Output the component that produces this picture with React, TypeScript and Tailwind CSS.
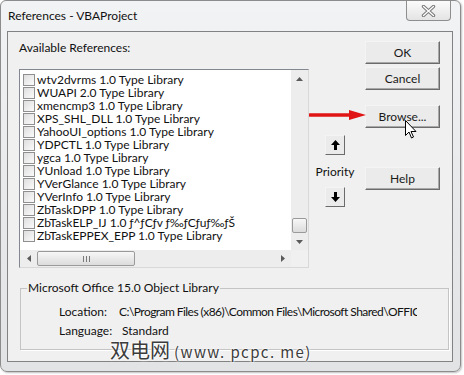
import React from "react";

const items = [
  "wtv2dvrms 1.0 Type Library",
  "WUAPI 2.0 Type Library",
  "xmencmp3 1.0 Type Library",
  "XPS_SHL_DLL 1.0 Type Library",
  "YahooUI_options 1.0 Type Library",
  "YDPCTL 1.0 Type Library",
  "ygca 1.0 Type Library",
  "YUnload 1.0 Type Library",
  "YVerGlance 1.0 Type Library",
  "YVerInfo 1.0 Type Library",
  "ZbTaskDPP 1.0 Type Library",
  "ZbTaskELP_IJ 1.0 ƒ^ƒCƒv ƒ‰ƒCƒuƒ‰ƒŠ",
  "ZbTaskEPPEX_EPP 1.0 Type Library",
];

function Btn({ label, className = "" }: { label: string; className?: string }) {
  return (
    <div
      className={
        "h-[23px] w-[75px] flex items-center justify-center border border-t-[#f4f4f4] border-l-[#f4f4f4] border-r-[#6b6b6b] border-b-[#6b6b6b] bg-[#ebebeb] shadow-[inset_-1px_-1px_0_#a8a8a8] text-[12px] text-[#1a1a1a] " +
        className
      }
    >
      {label}
    </div>
  );
}

function Tri({ dir }: { dir: "up" | "down" | "left" | "right" }) {
  const pts: Record<string, string> = {
    up: "0,4 3.5,0 7,4",
    down: "0,0 3.5,4 7,0",
    left: "4,0 0,3.5 4,7",
    right: "0,0 4,3.5 0,7",
  };
  const horiz = dir === "left" || dir === "right";
  return (
    <svg width={horiz ? 4 : 7} height={horiz ? 7 : 4} viewBox={horiz ? "0 0 4 7" : "0 0 7 4"}>
      <polygon points={pts[dir]} fill="#5a5a5a" />
    </svg>
  );
}

export default function App() {
  return (
    <div className="relative w-[464px] h-[375px] bg-white overflow-hidden font-['Lato',sans-serif] text-[#111]">
      <div className="w-[461px] h-[372px] rounded-b-[7px] rounded-t-[6px] border border-[#8c8c8c] bg-gradient-to-b from-[#f2f3f4] via-[#e9eaeb] to-[#e2e3e4] flex flex-col shadow-[1px_1px_2px_rgba(0,0,0,0.25)]">
        {/* title bar */}
        <div className="h-[30px] flex items-start justify-between">
          <div className="pl-[7px] pt-[6px] text-[12px] leading-[18px] text-[#111]">References - VBAProject</div>
          <div className="mr-[9px] w-[45px] h-[20px] rounded-b-[4px] border border-t-0 border-[#8e8e8e] bg-gradient-to-b from-[#fbfbfb] to-[#e4e4e4] flex items-center justify-center">
            <svg width="15" height="12" viewBox="0 0 15 12">
              <path d="M2.5 1.5 L12.5 10.5 M12.5 1.5 L2.5 10.5" stroke="#7a7a7a" strokeWidth="3.4" strokeLinecap="round" />
              <path d="M2.5 1.5 L12.5 10.5 M12.5 1.5 L2.5 10.5" stroke="#ffffff" strokeWidth="1.3" strokeLinecap="round" />
            </svg>
          </div>
        </div>
        {/* client */}
        <div className="ml-[6px] w-[446px] h-[331px] border border-[#828282] bg-[#f0f0f0] flex flex-col">
          <div className="flex items-start">
            {/* left column */}
            <div className="ml-[11px] pt-[8px] flex flex-col">
              <div className="h-[16px] leading-[16px] text-[12px]">Available References:</div>
              <div className="mt-[13px] w-[290px] h-[199px] border border-[#828790] border-r-[#d8d8d8] border-b-[#d8d8d8] bg-white flex flex-col">
                <div className="flex h-[180px]">
                  <div className="flex-1 pt-[3px] pl-[3px] overflow-hidden">
                    {items.map((t, i) => (
                      <div key={i} className="h-[13px] flex items-center whitespace-nowrap">
                        <div className="w-[12px] h-[12px] border border-[#8f8f8f] bg-gradient-to-br from-[#dedede] to-[#fbfbfb] shrink-0" />
                        <span className="ml-[2px] text-[12px] leading-[13px] text-[#111]">{t}</span>
                      </div>
                    ))}
                  </div>
                  <div className="w-[17px] h-[180px] bg-[#ededed] flex flex-col items-center">
                    <div className="h-[17px] flex items-center justify-center">
                      <Tri dir="up" />
                    </div>
                    <div className="flex-1" />
                    <div className="w-[15px] h-[15px] rounded-[2px] border border-[#9a9a9a] bg-gradient-to-b from-[#f7f7f7] to-[#dcdcdc]" />
                    <div className="h-[17px] flex items-center justify-center">
                      <Tri dir="down" />
                    </div>
                  </div>
                </div>
                <div className="flex h-[17px]">
                  <div className="flex-1 bg-[#ededed] flex items-center">
                    <div className="w-[17px] flex items-center justify-center">
                      <Tri dir="left" />
                    </div>
                    <div className="w-[98px] h-[15px] rounded-[2px] border border-[#9a9a9a] bg-gradient-to-b from-[#f7f7f7] to-[#dcdcdc] flex items-center justify-center gap-[2px]">
                      <div className="w-[1px] h-[6px] bg-[#7a7a7a]" />
                      <div className="w-[1px] h-[6px] bg-[#7a7a7a]" />
                      <div className="w-[1px] h-[6px] bg-[#7a7a7a]" />
                    </div>
                    <div className="flex-1" />
                    <div className="w-[17px] flex items-center justify-center">
                      <Tri dir="right" />
                    </div>
                  </div>
                  <div className="w-[17px] bg-[#f0f0f0]" />
                </div>
              </div>
            </div>
            {/* priority column */}
            <div className="ml-[16px] pt-[103px] w-[20px] flex flex-col items-center">
              <div className="w-[20px] h-[20px] border border-t-[#f4f4f4] border-l-[#f4f4f4] border-r-[#6b6b6b] border-b-[#6b6b6b] bg-[#ebebeb] flex items-center justify-center">
                <svg width="9" height="10" viewBox="0 0 9 10">
                  <polygon points="4.5,0 9,5 6,5 6,10 3,10 3,5 0,5" fill="#000" />
                </svg>
              </div>
              <div className="mt-[9px] h-[16px] leading-[16px] text-[12px] whitespace-nowrap">Priority</div>
              <div className="mt-[7px] w-[20px] h-[20px] border border-t-[#f4f4f4] border-l-[#f4f4f4] border-r-[#6b6b6b] border-b-[#6b6b6b] bg-[#ebebeb] flex items-center justify-center">
                <svg width="9" height="10" viewBox="0 0 9 10">
                  <polygon points="4.5,10 9,5 6,5 6,0 3,0 3,5 0,5" fill="#000" />
                </svg>
              </div>
            </div>
            {/* buttons column */}
            <div className="ml-[20px] pt-[9px] flex flex-col">
              <Btn label="OK" />
              <Btn label="Cancel" className="mt-[3px]" />
              <Btn label="Browse..." className="mt-[15px]" />
              <Btn label="Help" className="mt-[39px]" />
            </div>
          </div>
          {/* group box */}
          <fieldset className="mt-[12px] ml-[12px] w-[429px] h-[70px] border border-[#c4c4c4] pl-[6px] shadow-[1px_1px_0_#fff]">
            <legend className="px-[1px] text-[12px] leading-[16px]">Microsoft Office 15.0 Object Library</legend>
            <div className="pl-[32px] pt-[8px] flex flex-col text-[12px] leading-[16px]">
              <div className="flex h-[16px]">
                <span className="w-[60px] shrink-0">Location:</span>
                <span className="w-[298px] overflow-hidden whitespace-nowrap tracking-[-0.55px]">C:\Program Files (x86)\Common Files\Microsoft Shared\OFFICE15\MSO.DLL</span>
              </div>
              <div className="flex h-[16px] mt-[3px]">
                <span className="w-[63px] shrink-0">Language:</span>
                <span>Standard</span>
              </div>
            </div>
          </fieldset>
        </div>
      </div>

      {/* red arrow annotation */}
      <svg className="absolute left-[309px] top-[108px]" width="58" height="14" viewBox="0 0 58 14">
        <path d="M1 7 L44 7" stroke="#e01414" strokeWidth="3.5" strokeLinecap="round" />
        <polygon points="40,2 57,7 40,12" fill="#e01414" />
      </svg>

      {/* mouse cursor */}
      <svg className="absolute left-[405px] top-[120px]" width="12" height="19" viewBox="0 0 12 19">
        <path d="M0.5 0.5 L0.5 15.5 L4 12 L6.5 18 L8.5 17 L6 11.5 L11 11.5 Z" fill="#fff" stroke="#000" strokeWidth="1" strokeLinejoin="round" />
      </svg>

      {/* watermark */}
      <div className="absolute left-[110px] top-[337px] leading-[26px] text-[#3c3c3c] whitespace-nowrap font-['Noto_Sans_CJK_SC',sans-serif] [text-shadow:0_0_2px_#fff,0_0_2px_#fff,0_0_3px_#fff]">
        <span className="text-[20px]">双电网</span>
        <span className="ml-[4px] text-[15px] tracking-[1.4px]">(www. pcpc. me)</span>
      </div>
    </div>
  );
}
